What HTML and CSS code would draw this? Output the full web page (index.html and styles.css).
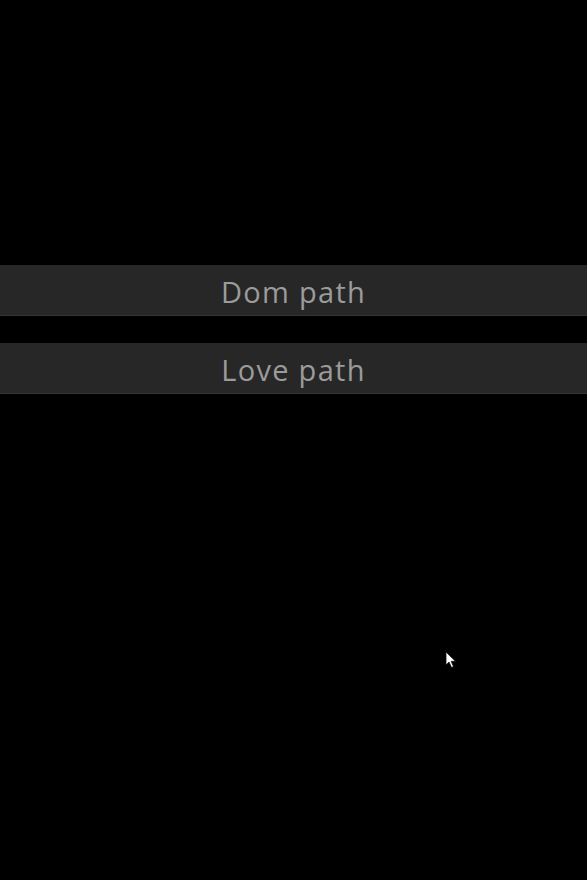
FILE: index.html
```html
<!DOCTYPE html>
<html>
<head>
<meta charset="utf-8">
<link rel="stylesheet" href="styles.css">
</head>
<body>
<main class="menu">
  <div class="item">Dom path</div>
  <div class="item">Love path</div>
</main>
<svg class="cursor" width="12" height="18" viewBox="0 0 12 18"><path d="M1 1 L1 14 L4 11 L6.5 16.5 L8.5 15.6 L6.2 10.3 L10.5 10.3 Z" fill="#fff" stroke="#111" stroke-width="0.8"/></svg>
</body>
</html>
```
FILE: styles.css
```css
html, body {
  margin: 0;
  padding: 0;
  background: #000;
  height: 100%;
}
body {
  position: relative;
  font-family: "Open Sans", "Noto Sans", sans-serif;
}
.menu {
  padding-top: 265px;
  display: flex;
  flex-direction: column;
  gap: 27px;
}
.item {
  height: 51px;
  background: #272727;
  border-bottom: 1px solid #333;
  color: #9b9b9b;
  font-size: 29px;
  font-weight: 500;
  letter-spacing: 1.3px;
  display: flex;
  align-items: center;
  justify-content: center;
  padding-top: 2px;
  box-sizing: border-box;
}
.cursor {
  position: absolute;
  left: 445px;
  top: 651px;
}
```
